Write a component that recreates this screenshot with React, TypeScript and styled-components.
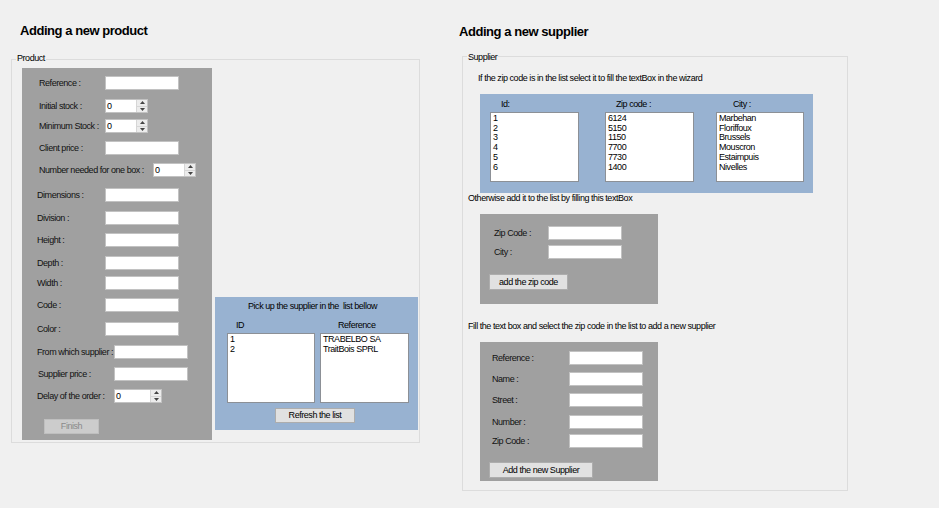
import React from 'react';
import styled, { createGlobalStyle, css } from 'styled-components';

const Global = createGlobalStyle`
  html, body { margin: 0; padding: 0; background: #f0f0f0; }
  body {
    font-family: "Liberation Sans", Arial, sans-serif;
    font-size: 9px;
    letter-spacing: -0.45px;
    color: #000;
    width: 939px;
    height: 508px;
    overflow: hidden;
  }
  * { box-sizing: border-box; }
`;

const Page = styled.div`
  display: flex;
  align-items: flex-start;
  width: 939px;
  height: 508px;
  padding: 23px 0 0 11px;
`;

const Column = styled.section<{ $width?: number; $top?: number }>`
  display: flex;
  flex-direction: column;
  align-items: flex-start;
  ${(p) => (p.$width ? `width: ${p.$width}px;` : '')}
  padding-top: ${(p) => p.$top ?? 0}px;
`;

const Title = styled.h1<{ $indent: number }>`
  margin: 0;
  padding-left: ${(p) => p.$indent}px;
  font-size: 13px;
  line-height: 16px;
  font-weight: 700;
  letter-spacing: -0.45px;
  white-space: nowrap;
`;

const GroupBox = styled.div<{ $w: number; $h: number; $mt: number; $ml: number }>`
  position: relative;
  width: ${(p) => p.$w}px;
  height: ${(p) => p.$h}px;
  margin: ${(p) => p.$mt}px 0 0 ${(p) => p.$ml}px;
  border: 1px solid #dcdcdc;
`;

const Legend = styled.span<{ $top: number }>`
  position: absolute;
  left: 4px;
  top: ${(p) => p.$top}px;
  padding: 0 1px;
  line-height: 10px;
  background: #f0f0f0;
  white-space: nowrap;
`;

const ProductBody = styled.div`
  display: flex;
  align-items: flex-start;
  padding: 8px 0 0 10px;
`;

const SupplierBody = styled.div`
  display: flex;
  flex-direction: column;
  align-items: flex-start;
`;

const Panel = styled.div<{ $w: number; $h: number; $tone: 'grey' | 'blue'; $mt?: number; $ml?: number; $pt?: number }>`
  display: flex;
  flex-direction: column;
  align-items: flex-start;
  flex: none;
  width: ${(p) => p.$w}px;
  height: ${(p) => p.$h}px;
  margin: ${(p) => p.$mt ?? 0}px 0 0 ${(p) => p.$ml ?? 0}px;
  padding-top: ${(p) => p.$pt ?? 0}px;
  background: ${(p) => (p.$tone === 'grey' ? '#a0a0a0' : '#98b2d1')};
`;

const Row = styled.div<{ $indent: number; $gap: number }>`
  display: flex;
  align-items: center;
  height: 14px;
  margin-top: ${(p) => p.$gap}px;
  padding-left: ${(p) => p.$indent}px;
`;

const FieldLabel = styled.label<{ $w: number }>`
  width: ${(p) => p.$w}px;
  line-height: 10px;
  white-space: nowrap;
  color: #111;
  margin-top: -1px;
`;

const TextBox = styled.input<{ $w: number }>`
  width: ${(p) => p.$w}px;
  height: 14px;
  margin: 0;
  padding: 0 2px;
  background: #fff;
  border: 1px solid #c2c2c2;
  font: inherit;
  outline: none;
`;

const Numeric = styled.div<{ $w: number }>`
  display: flex;
  width: ${(p) => p.$w}px;
  height: 14px;
  background: #fff;
  border: 1px solid #c2c2c2;
`;

const NumValue = styled.span`
  flex: 1;
  padding-left: 1px;
  line-height: 12px;
`;

const Spinner = styled.div`
  display: flex;
  flex-direction: column;
  width: 11px;
  border-left: 1px solid #d6d6d6;
`;

const SpinBtn = styled.div`
  flex: 1;
  display: flex;
  align-items: center;
  justify-content: center;
  background: #ececec;
  & + & { border-top: 1px solid #d6d6d6; }
`;

const btnBase = css`
  padding: 0;
  font: inherit;
  letter-spacing: -0.45px;
  text-align: center;
  white-space: nowrap;
`;

const Button = styled.button<{ $w: number; $h: number; $ml: number; $mt: number }>`
  ${btnBase}
  width: ${(p) => p.$w}px;
  height: ${(p) => p.$h}px;
  margin: ${(p) => p.$mt}px 0 0 ${(p) => p.$ml}px;
  background: #e1e1e1;
  border: 1px solid #adadad;
  color: #000;
  line-height: ${(p) => p.$h - 2}px;
  &:disabled {
    background: #cccccc;
    border-color: #bfbfbf;
    color: #8a8a8a;
  }
`;

const Note = styled.p<{ $indent: number; $mt: number }>`
  margin: ${(p) => p.$mt}px 0 0 ${(p) => p.$indent}px;
  line-height: 10px;
  white-space: pre;
`;

const ListRow = styled.div<{ $indent: number; $mt: number }>`
  display: flex;
  align-items: flex-start;
  padding-left: ${(p) => p.$indent}px;
  margin-top: ${(p) => p.$mt}px;
`;

const ListColumn = styled.div<{ $ml: number }>`
  display: flex;
  flex-direction: column;
  margin-left: ${(p) => p.$ml}px;
`;

const ColHeader = styled.div<{ $indent: number }>`
  height: 10px;
  line-height: 10px;
  padding-left: ${(p) => p.$indent}px;
  white-space: nowrap;
`;

const ListBox = styled.ul<{ $w: number }>`
  width: ${(p) => p.$w}px;
  height: 70px;
  margin: 3px 0 0;
  padding: 1px 2px;
  list-style: none;
  background: #fff;
  border: 1px solid #8c9096;
`;

const ListItem = styled.li`
  line-height: 9.7px;
  white-space: nowrap;
`;

const Arrow = ({ up }: { up?: boolean }) => (
  <svg width="5" height="3" viewBox="0 0 5 3">
    <path d={up ? 'M0 3 L2.5 0 L5 3 Z' : 'M0 0 L2.5 3 L5 0 Z'} fill="#444" />
  </svg>
);

const NumField = ({ w }: { w: number }) => (
  <Numeric $w={w}>
    <NumValue>0</NumValue>
    <Spinner>
      <SpinBtn><Arrow up /></SpinBtn>
      <SpinBtn><Arrow /></SpinBtn>
    </Spinner>
  </Numeric>
);

type Field = { label: string; indent: number; at: number; gap: number; kind: 'text' | 'num'; w: number };

const productFields: Field[] = [
  { label: 'Reference :', indent: 17, at: 83, gap: 8, kind: 'text', w: 74 },
  { label: 'Initial stock :', indent: 17, at: 83, gap: 9, kind: 'num', w: 43 },
  { label: 'Minimum Stock :', indent: 17, at: 83, gap: 6, kind: 'num', w: 43 },
  { label: 'Client price :', indent: 17, at: 83, gap: 8, kind: 'text', w: 74 },
  { label: 'Number needed for one box :', indent: 17, at: 131, gap: 8, kind: 'num', w: 43 },
  { label: 'Dimensions :', indent: 15, at: 83, gap: 11, kind: 'text', w: 74 },
  { label: 'Division :', indent: 15, at: 83, gap: 9, kind: 'text', w: 74 },
  { label: 'Height :', indent: 15, at: 83, gap: 8, kind: 'text', w: 74 },
  { label: 'Depth :', indent: 15, at: 83, gap: 9, kind: 'text', w: 74 },
  { label: 'Width :', indent: 15, at: 83, gap: 6, kind: 'text', w: 74 },
  { label: 'Code :', indent: 15, at: 83, gap: 8, kind: 'text', w: 74 },
  { label: 'Color :', indent: 15, at: 83, gap: 10, kind: 'text', w: 74 },
  { label: 'From which supplier :', indent: 15, at: 92, gap: 9, kind: 'text', w: 74 },
  { label: 'Supplier price :', indent: 16, at: 92, gap: 8, kind: 'text', w: 74 },
  { label: 'Delay of the order :', indent: 15, at: 92, gap: 8, kind: 'num', w: 48 },
];

const zipFields: Field[] = [
  { label: 'Zip Code :', indent: 14, at: 68, gap: 12, kind: 'text', w: 74 },
  { label: 'City :', indent: 14, at: 68, gap: 5, kind: 'text', w: 74 },
];

const supplierFields: Field[] = [
  { label: 'Reference :', indent: 12, at: 89, gap: 9, kind: 'text', w: 74 },
  { label: 'Name :', indent: 12, at: 89, gap: 7, kind: 'text', w: 74 },
  { label: 'Street :', indent: 12, at: 89, gap: 7, kind: 'text', w: 74 },
  { label: 'Number :', indent: 12, at: 89, gap: 8, kind: 'text', w: 74 },
  { label: 'Zip Code :', indent: 12, at: 89, gap: 5, kind: 'text', w: 74 },
];

const Fields = ({ items }: { items: Field[] }) => (
  <>
    {items.map((f) => (
      <Row key={f.label} $indent={f.indent} $gap={f.gap}>
        <FieldLabel $w={f.at - f.indent}>{f.label}</FieldLabel>
        {f.kind === 'text' ? <TextBox $w={f.w} readOnly /> : <NumField w={f.w} />}
      </Row>
    ))}
  </>
);

export default function App() {
  return (
    <>
      <Global />
      <Page>
        <Column $width={448}>
          <Title $indent={9}>Adding a new product</Title>
          <GroupBox $w={409} $h={384} $mt={20} $ml={0}>
            <Legend $top={-7}>Product</Legend>
            <ProductBody>
              <Panel $tone="grey" $w={190} $h={372}>
                <Fields items={productFields} />
                <Button $w={55} $h={15} $ml={22} $mt={16} disabled>Finish</Button>
              </Panel>
              <Panel $tone="blue" $w={203} $h={133} $mt={229} $ml={3} $pt={4}>
                <Note $indent={33} $mt={0}>Pick up the supplier in the  list bellow</Note>
                <ListRow $indent={12} $mt={9}>
                  <ListColumn $ml={0}>
                    <ColHeader $indent={9}>ID</ColHeader>
                    <ListBox $w={88}>
                      <ListItem>1</ListItem>
                      <ListItem>2</ListItem>
                    </ListBox>
                  </ListColumn>
                  <ListColumn $ml={5}>
                    <ColHeader $indent={18}>Reference</ColHeader>
                    <ListBox $w={89}>
                      <ListItem>TRABELBO SA</ListItem>
                      <ListItem>TraitBois SPRL</ListItem>
                    </ListBox>
                  </ListColumn>
                </ListRow>
                <Button $w={80} $h={15} $ml={60} $mt={5}>Refresh the list</Button>
              </Panel>
            </ProductBody>
          </GroupBox>
        </Column>

        <Column $top={1}>
          <Title $indent={0}>Adding a new supplier</Title>
          <GroupBox $w={386} $h={435} $mt={16} $ml={3}>
            <Legend $top={-5}>Supplier</Legend>
            <SupplierBody>
              <Note $indent={15} $mt={16}>If the zip code is in the list select it to fill the textBox in the wizard</Note>
              <Panel $tone="blue" $w={333} $h={99} $mt={11} $ml={17} $pt={5}>
                <ListRow $indent={10} $mt={0}>
                  <ListColumn $ml={0}>
                    <ColHeader $indent={11}>Id:</ColHeader>
                    <ListBox $w={89}>
                      {['1', '2', '3', '4', '5', '6'].map((v) => <ListItem key={v}>{v}</ListItem>)}
                    </ListBox>
                  </ListColumn>
                  <ListColumn $ml={26}>
                    <ColHeader $indent={11}>Zip code :</ColHeader>
                    <ListBox $w={89}>
                      {['6124', '5150', '1150', '7700', '7730', '1400'].map((v) => <ListItem key={v}>{v}</ListItem>)}
                    </ListBox>
                  </ListColumn>
                  <ListColumn $ml={22}>
                    <ColHeader $indent={17}>City :</ColHeader>
                    <ListBox $w={88}>
                      {['Marbehan', 'Floriffoux', 'Brussels', 'Mouscron', 'Estaimpuis', 'Nivelles'].map((v) => (
                        <ListItem key={v}>{v}</ListItem>
                      ))}
                    </ListBox>
                  </ListColumn>
                </ListRow>
              </Panel>
              <Note $indent={5} $mt={0}>Otherwise add it to the list by filling this textBox</Note>
              <Panel $tone="grey" $w={178} $h={90} $mt={11} $ml={17}>
                <Fields items={zipFields} />
                <Button $w={79} $h={16} $ml={9} $mt={15}>add the zip code</Button>
              </Panel>
              <Note $indent={5} $mt={17}>Fill the text box and select the zip code in the list to add a new supplier</Note>
              <Panel $tone="grey" $w={178} $h={139} $mt={11} $ml={17}>
                <Fields items={supplierFields} />
                <Button $w={104} $h={16} $ml={9} $mt={14}>Add the new Supplier</Button>
              </Panel>
            </SupplierBody>
          </GroupBox>
        </Column>
      </Page>
    </>
  );
}
